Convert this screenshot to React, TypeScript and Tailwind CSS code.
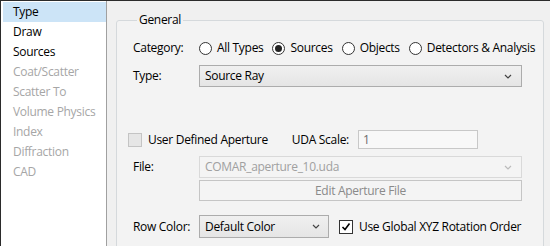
import React from "react";

const font = { fontFamily: '"Open Sans", "Noto Sans", sans-serif' };

function Radio({ checked, label }: { checked?: boolean; label: string }) {
  return (
    <div className="flex items-center gap-[5px] shrink-0 whitespace-nowrap">
      <span className="w-[13px] h-[13px] rounded-full border border-[#333] bg-white flex items-center justify-center">
        {checked && <span className="w-[7px] h-[7px] rounded-full bg-[#222]" />}
      </span>
      <span>{label}</span>
    </div>
  );
}

function Chevron({ color }: { color: string }) {
  return (
    <svg width="8" height="5" viewBox="0 0 8 5">
      <path d="M1 1 L4 4 L7 1" fill="none" stroke={color} strokeWidth="1.2" />
    </svg>
  );
}

export default function App() {
  const items: [string, boolean][] = [
    ["Type", true],
    ["Draw", true],
    ["Sources", true],
    ["Coat/Scatter", false],
    ["Scatter To", false],
    ["Volume Physics", false],
    ["Index", false],
    ["Diffraction", false],
    ["CAD", false],
  ];
  return (
    <div
      style={font}
      className="w-[550px] h-[246px] overflow-hidden flex border-l border-t border-[#2b2b2b] bg-[#f0f0f0] text-[12px] tracking-[-0.3px] text-black whitespace-nowrap"
    >
      <div className="w-[106px] shrink-0 bg-white border-r border-[#a0a0a0] pt-px pl-[2px]">
        {items.map(([t, en], i) => (
          <div
            key={t}
            className={`h-[20px] flex items-center pl-[10px] ${i === 0 ? "bg-[#cce4f7]" : ""} ${en ? "text-black" : "text-[#a6a6a6]"}`}
          >
            {t}
          </div>
        ))}
      </div>
      <div className="flex-1 min-w-0 pl-[9px] pr-[6px] pt-[10px]">
        <fieldset className="min-w-0 border border-[#d5d9dc] rounded-[3px] h-[300px] pl-[16px] pr-[21px] bg-[#f3f3f3]">
          <legend className="ml-[4px] px-[2px]">General</legend>
          <div className="flex items-center h-[22px] mt-[8px]">
            <span className="w-[66px] shrink-0">Category:</span>
            <div className="flex items-center gap-[9px]">
              <Radio label="All Types" />
              <Radio checked label="Sources" />
              <Radio label="Objects" />
              <Radio label="Detectors & Analysis" />
            </div>
          </div>
          <div className="flex items-center mt-[6px]">
            <span className="w-[66px] shrink-0">Type:</span>
            <div className="flex-1 h-[22px] border border-[#acacac] bg-gradient-to-b from-[#f0f0f0] to-[#e5e5e5] flex items-center justify-between pl-[5px] pr-[9px]">
              <span>Source Ray</span>
              <Chevron color="#444" />
            </div>
          </div>
          <div className="flex items-center mt-[43px] -ml-[5px] h-[19px]">
            <span className="w-[14px] h-[14px] border border-[#c4c4c4] bg-[#e6e6e6]" />
            <span className="ml-[6px]">User Defined Aperture</span>
            <span className="ml-[24px]">UDA Scale:</span>
            <div className="ml-[9px] w-[120px] h-[19px] border border-[#c8c8c8] bg-[#f8f8f8] flex items-center pl-[4px] text-[#6d6d6d]">
              1
            </div>
          </div>
          <div className="flex items-center mt-[7px]">
            <span className="w-[66px] shrink-0">File:</span>
            <div className="flex-1 h-[22px] border border-[#d9d9d9] bg-[#f4f4f4] flex items-center justify-between pl-[5px] pr-[9px] text-[#a0a0a0]">
              <span>COMAR_aperture_10.uda</span>
              <Chevron color="#bbb" />
            </div>
          </div>
          <div className="flex mt-[2px]">
            <span className="w-[66px] shrink-0" />
            <div className="flex-1 h-[21px] border border-[#c5c5c5] bg-[#f4f4f4] flex items-center justify-center text-[#8a8a8a]">
              Edit Aperture File
            </div>
          </div>
          <div className="flex items-center mt-[14px]">
            <span className="w-[66px] shrink-0">Row Color:</span>
            <div className="w-[130px] h-[23px] border border-[#acacac] bg-gradient-to-b from-[#f0f0f0] to-[#e5e5e5] flex items-center justify-between pl-[5px] pr-[8px]">
              <span>Default Color</span>
              <Chevron color="#444" />
            </div>
            <span className="ml-[10px] w-[14px] h-[14px] border border-[#333] bg-white flex items-center justify-center">
              <svg width="10" height="10" viewBox="0 0 10 10">
                <path d="M1.5 5 L4 7.5 L8.5 1.5" fill="none" stroke="#000" strokeWidth="1.6" />
              </svg>
            </span>
            <span className="ml-[6px]">Use Global XYZ Rotation Order</span>
          </div>
        </fieldset>
      </div>
    </div>
  );
}
